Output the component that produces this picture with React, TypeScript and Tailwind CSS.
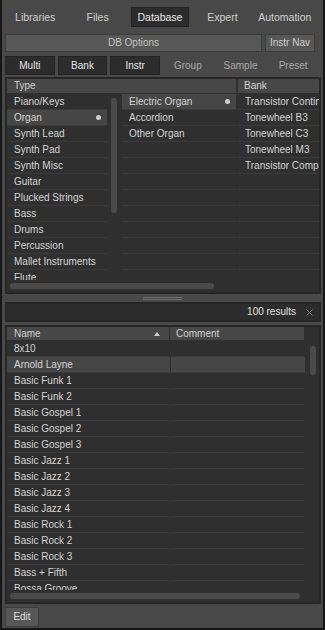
import React from "react";

const types = [
  "Piano/Keys",
  "Organ",
  "Synth Lead",
  "Synth Pad",
  "Synth Misc",
  "Guitar",
  "Plucked Strings",
  "Bass",
  "Drums",
  "Percussion",
  "Mallet Instruments",
  "Flute",
];

const subtypes = ["Electric Organ", "Accordion", "Other Organ"];
const banks = [
  "Transistor Continental",
  "Tonewheel B3",
  "Tonewheel C3",
  "Tonewheel M3",
  "Transistor Compact",
];

const results = [
  "8x10",
  "Arnold Layne",
  "Basic Funk 1",
  "Basic Funk 2",
  "Basic Gospel 1",
  "Basic Gospel 2",
  "Basic Gospel 3",
  "Basic Jazz 1",
  "Basic Jazz 2",
  "Basic Jazz 3",
  "Basic Jazz 4",
  "Basic Rock 1",
  "Basic Rock 2",
  "Basic Rock 3",
  "Bass + Fifth",
  "Bossa Groove",
];

function Dot() {
  return <span className="ml-auto mr-[6px] w-[5px] h-[5px] rounded-full bg-[#cfcfcf]" />;
}

function ListRow({ label, selected }: { label?: string; selected?: boolean }) {
  return (
    <div
      className={
        "h-[16px] flex items-center pl-[7px] border-b border-[#3a3a3a] whitespace-nowrap " +
        (selected ? "bg-[#464646]" : "")
      }
    >
      {label}
      {selected && <Dot />}
    </div>
  );
}

export default function App() {
  return (
    <div
      className="w-[325px] h-[630px] bg-[#484848] border-l-2 border-r-2 border-b-2 border-[#161616] text-[10px] leading-none text-[#d4d4d4] flex flex-col overflow-hidden"
      style={{ fontFamily: '"Liberation Sans", Arial, sans-serif' }}
    >
      {/* Main tabs */}
      <div className="mt-[7px] ml-[2px] w-[312px] h-[20px] grid grid-cols-5 text-[10.5px] text-[#cfcfcf]">
        {["Libraries", "Files", "Database", "Expert", "Automation"].map((t) => (
          <div
            key={t}
            className={
              "flex items-center justify-center " +
              (t === "Database" ? "mx-[2px] bg-[#2c2c2c] border border-[#222] text-[#e8e8e8]" : "")
            }
          >
            {t}
          </div>
        ))}
      </div>

      {/* DB options */}
      <div className="mt-[7px] ml-[3px] h-[18px] flex gap-[3px]">
        <div className="w-[257px] bg-[#575757] border border-[#3c3c3c] flex items-center justify-center text-[#c4c4c4]">
          DB Options
        </div>
        <div className="w-[50px] bg-[#575757] border border-[#3c3c3c] flex items-center justify-center text-[#d0d0d0]">
          Instr Nav
        </div>
      </div>

      {/* Level tabs */}
      <div className="mt-[4px] ml-[3px] w-[313px] h-[19px] grid grid-cols-6 gap-[3px]">
        {["Multi", "Bank", "Instr"].map((t) => (
          <div
            key={t}
            className="bg-[#2c2c2c] border border-[#232323] flex items-center justify-center text-[#e4e4e4]"
          >
            {t}
          </div>
        ))}
        {["Group", "Sample", "Preset"].map((t) => (
          <div key={t} className="flex items-center justify-center text-[#a9a9a9]">
            {t}
          </div>
        ))}
      </div>

      {/* Attribute browser */}
      <div className="mt-[2px] ml-[3px] w-[316px] h-[217px] bg-[#2f2f2f] border-2 border-[#262626] flex flex-col">
        <div className="h-[14px] flex gap-[2px] text-[#d0d0d0]">
          <div className="w-[229px] bg-[#474747] flex items-center pl-[7px]">Type</div>
          <div className="flex-1 bg-[#474747] flex items-center pl-[6px]">Bank</div>
        </div>
        <div className="mt-[1px] h-[186px] flex overflow-hidden">
          <div className="w-[100px] shrink-0">
            {types.map((t) => (
              <ListRow key={t} label={t} selected={t === "Organ"} />
            ))}
          </div>
          <div className="w-[15px] shrink-0 pl-[4px] pt-[4px]">
            <div className="w-[6px] h-[115px] rounded-full bg-[#4a4a4a]" />
          </div>
          <div className="w-[114px] shrink-0">
            {Array.from({ length: 11 }).map((_, i) => (
              <ListRow key={i} label={subtypes[i]} selected={i === 0} />
            ))}
          </div>
          <div className="flex-1 ml-[2px] overflow-hidden">
            {Array.from({ length: 11 }).map((_, i) => (
              <ListRow key={i} label={banks[i]} />
            ))}
          </div>
        </div>
        <div className="mt-[3px] ml-[3px] w-[204px] h-[6px] rounded-full bg-[#4a4a4a]" />
      </div>

      {/* Splitter */}
      <div className="h-[8px] flex flex-col items-center justify-center gap-[1px]">
        <div className="w-[39px] h-px bg-[#6c6c6c]" />
        <div className="w-[39px] h-px bg-[#6c6c6c]" />
      </div>

      {/* Results bar */}
      <div className="ml-[3px] w-[316px] h-[20px] bg-[#2c2c2c] border-2 border-[#262626] flex items-center justify-end pr-[6px] text-[#e0e0e0]">
        <span>100 results</span>
        <svg width="7" height="7" viewBox="0 0 7 7" className="ml-[10px]">
          <path d="M0.5 0.5 L6.5 6.5 M6.5 0.5 L0.5 6.5" stroke="#7c7c7c" strokeWidth="1" />
        </svg>
      </div>

      {/* Results list */}
      <div className="mt-[3px] ml-[3px] w-[316px] h-[279px] bg-[#2f2f2f] border-2 border-[#262626] flex flex-col">
        <div className="h-[13px] flex text-[#d0d0d0]">
          <div className="w-[162px] bg-[#474747] flex items-center pl-[7px] pr-[9px]">
            Name
            <svg width="6" height="4" viewBox="0 0 6 4" className="ml-auto">
              <path d="M0 4 L3 0 L6 4 Z" fill="#d0d0d0" />
            </svg>
          </div>
          <div className="w-[134px] ml-[1px] bg-[#474747] flex items-center pl-[6px]">Comment</div>
        </div>
        <div className="mt-[1px] h-[249px] flex overflow-hidden">
          <div className="w-[298px] shrink-0">
            {results.map((r) => (
              <div
                key={r}
                className={"h-[16px] flex " + (r === "Arnold Layne" ? "bg-[#464646]" : "")}
              >
                <div className="w-[162px] flex items-center pl-[7px] border-b border-[#3a3a3a] whitespace-nowrap">
                  {r}
                </div>
                <div className="w-[134px] ml-[1px] border-b border-[#3a3a3a] border-l border-l-[#2f2f2f]" />
              </div>
            ))}
          </div>
          <div className="flex-1 pl-[5px] pt-[5px]">
            <div className="w-[6px] h-[29px] rounded-full bg-[#4a4a4a]" />
          </div>
        </div>
        <div className="mt-[3px] ml-[3px] w-[290px] h-[6px] rounded-full bg-[#4a4a4a]" />
      </div>

      {/* Edit */}
      <div className="mt-[3px] ml-[3px] w-[34px] h-[20px] bg-[#575757] border border-[#3c3c3c] flex items-center justify-center text-[#dcdcdc]">
        Edit
      </div>
    </div>
  );
}
